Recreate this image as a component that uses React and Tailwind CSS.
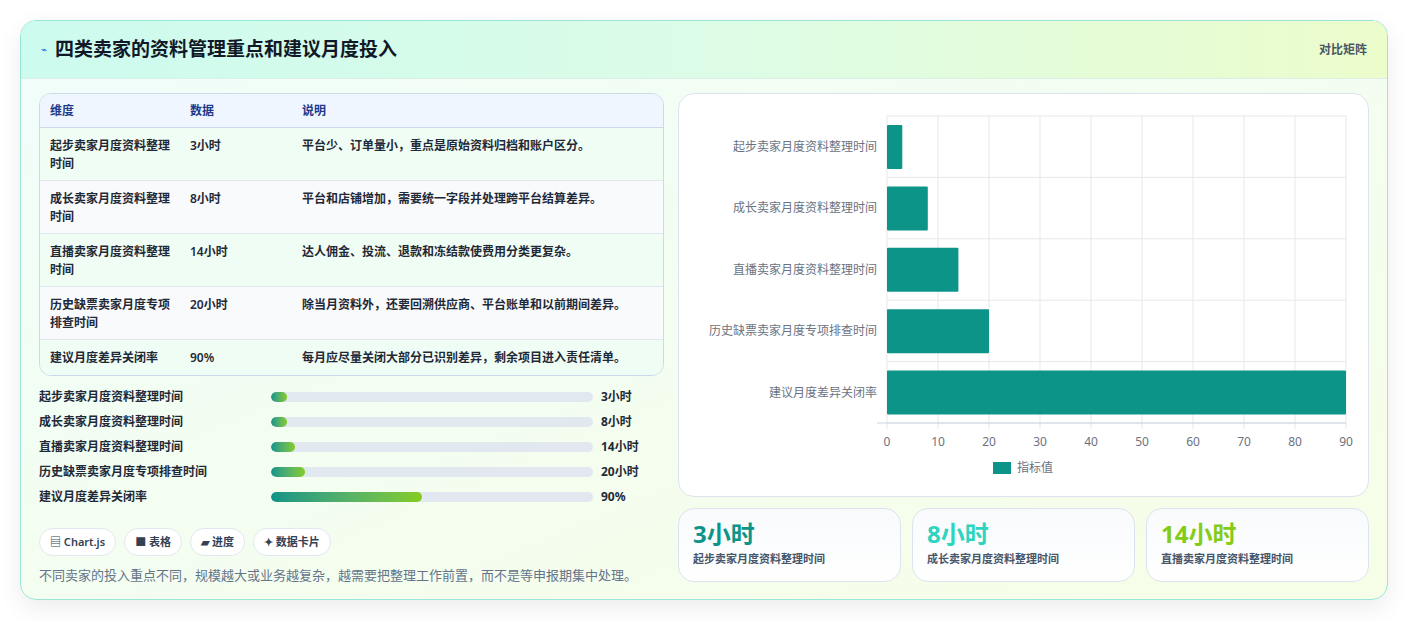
import React from 'react';

const rows = [
  { name: '起步卖家月度资料整理时间', value: 3, unit: '3小时', note: '平台少、订单量小，重点是原始资料归档和账户区分。', pct: 5 },
  { name: '成长卖家月度资料整理时间', value: 8, unit: '8小时', note: '平台和店铺增加，需要统一字段并处理跨平台结算差异。', pct: 5 },
  { name: '直播卖家月度资料整理时间', value: 14, unit: '14小时', note: '达人佣金、投流、退款和冻结款使费用分类更复杂。', pct: 7.5 },
  { name: '历史缺票卖家月度专项排查时间', value: 20, unit: '20小时', note: '除当月资料外，还要回溯供应商、平台账单和以前期间差异。', pct: 10.5 },
  { name: '建议月度差异关闭率', value: 90, unit: '90%', note: '每月应尽量关闭大部分已识别差异，剩余项目进入责任清单。', pct: 47 },
];

const font = { fontFamily: '"Noto Sans", "Noto Sans CJK SC", sans-serif' };

const Chart = () => {
  const x0 = 208, x1 = 667, top = 22, rowH = 61.4;
  const sx = (v) => x0 + (v / 90) * (x1 - x0);
  return (
    <svg width="689" height="402" className="block">
      {Array.from({ length: 10 }).map((_, i) => (
        <line key={i} x1={sx(i * 10)} x2={sx(i * 10)} y1={top} y2={top + rowH * 5 + 6} stroke="#e5e7eb" />
      ))}
      {Array.from({ length: 6 }).map((_, i) => (
        <line key={i} x1={x0} x2={x1} y1={top + rowH * i} y2={top + rowH * i} stroke="#e5e7eb" />
      ))}
      <line x1={x0 - 10} x2={x1} y1={top + rowH * 5} y2={top + rowH * 5} stroke="#cbd5e1" />
      {rows.map((r, i) => (
        <g key={i}>
          <rect x={x0} y={top + rowH * i + 9} width={sx(r.value) - x0} height={44} fill="#0d9488" rx="1" />
          <text x={x0 - 10} y={top + rowH * i + 35} textAnchor="end" fontSize="12" fill="#6b7280" style={font}>{r.name}</text>
        </g>
      ))}
      {Array.from({ length: 10 }).map((_, i) => (
        <text key={i} x={sx(i * 10)} y={352} textAnchor="middle" fontSize="12" fill="#6b7280" style={font}>{i * 10}</text>
      ))}
      <rect x={314} y={368} width={18} height={12} fill="#0d9488" />
      <text x={338} y={378} fontSize="12" fill="#6b7280" style={font}>指标值</text>
    </svg>
  );
};

export default function App() {
  return (
    <div className="min-h-screen bg-white pt-5 px-5" style={font}>
      <div className="w-[1368px] h-[580px] rounded-2xl border border-[#99e6d6] shadow-[0_8px_24px_rgba(0,0,0,0.08)] overflow-hidden bg-gradient-to-br from-[#f0fdfa] to-[#f7fee7]">
        <div className="h-[58px] flex items-center justify-between px-5 border-b border-[#dcefe6] bg-gradient-to-r from-[#ccfbef] via-[#dcfce7] to-[#ecfccb]">
          <div className="flex items-center gap-2">
            <span className="text-[#2563eb] text-[10px]">⌁</span>
            <h1 className="text-[19px] font-bold text-[#111827]">四类卖家的资料管理重点和建议月度投入</h1>
          </div>
          <span className="text-xs font-semibold text-[#4b5563]">对比矩阵</span>
        </div>
        <div className="flex gap-[14px] px-[18px] pt-[14px]">
          <div className="w-[626px] flex flex-col">
            <div className="rounded-xl border border-[#cbd9ea] overflow-hidden text-xs text-[#1f2937] font-semibold">
              <div className="flex h-[34px] items-center bg-[#eff6ff] border-b border-[#cbd9ea] text-[#1e3a8a] font-semibold">
                <div className="w-[150px] pl-[10px]">维度</div>
                <div className="w-[112px]">数据</div>
                <div>说明</div>
              </div>
              {rows.map((r, i) => (
                <div key={i} className={`flex ${i === 4 ? 'h-[35px] items-center' : 'h-[53px] pt-[9px]'} ${i < 4 ? 'border-b border-[#e2e8f0]' : ''} ${i % 2 === 0 ? 'bg-[#f0fdf4]' : 'bg-[#f8fafc]'}`}>
                  <div className="w-[150px] pl-[10px] pr-3 leading-[18px]">{r.name}</div>
                  <div className="w-[112px] leading-[18px]">{r.unit}</div>
                  <div className="flex-1 leading-[18px]">{r.note}</div>
                </div>
              ))}
            </div>
            <div className="mt-[12px] flex flex-col gap-[7px]">
              {rows.map((r, i) => (
                <div key={i} className="flex items-center h-[18px] text-xs font-semibold text-[#1f2937]">
                  <div className="w-[232px]">{r.name}</div>
                  <div className="w-[322px] h-[10px] rounded-full bg-[#e2e8f0] overflow-hidden">
                    <div className="h-full rounded-full bg-gradient-to-r from-[#0d9488] to-[#84cc16]" style={{ width: `${r.pct}%` }} />
                  </div>
                  <div className="ml-2 font-bold">{r.unit}</div>
                </div>
              ))}
            </div>
            <div className="flex gap-2 mt-[22px]">
              {['▤ Chart.js', '■ 表格', '▰ 进度', '✦ 数据卡片'].map((c) => (
                <span key={c} className="h-[28px] px-[10px] flex items-center rounded-full border border-[#e2e8f0] bg-white text-[11px] font-semibold text-[#334155]">{c}</span>
              ))}
            </div>
            <p className="mt-[10px] text-[13px] text-[#64748b]">不同卖家的投入重点不同，规模越大或业务越复杂，越需要把整理工作前置，而不是等申报期集中处理。</p>
          </div>
          <div className="flex-1 flex flex-col gap-[11px]">
            <div className="h-[404px] rounded-2xl border border-[#dbe4ee] bg-white">
              <Chart />
            </div>
            <div className="grid grid-cols-3 gap-[11px]">
              {[['3小时', 'text-[#0d9488]', rows[0].name], ['8小时', 'text-[#2dd4bf]', rows[1].name], ['14小时', 'text-[#84cc16]', rows[2].name]].map(([v, c, n]) => (
                <div key={v} className="h-[74px] rounded-2xl border border-[#dbe4ee] bg-gradient-to-b from-[#f8fafc] to-white px-[14px] pt-[8px]">
                  <div className={`text-[24px] font-bold leading-[34px] ${c}`}>{v}</div>
                  <div className="text-[11px] font-semibold text-[#475569]">{n}</div>
                </div>
              ))}
            </div>
          </div>
        </div>
      </div>
    </div>
  );
}
